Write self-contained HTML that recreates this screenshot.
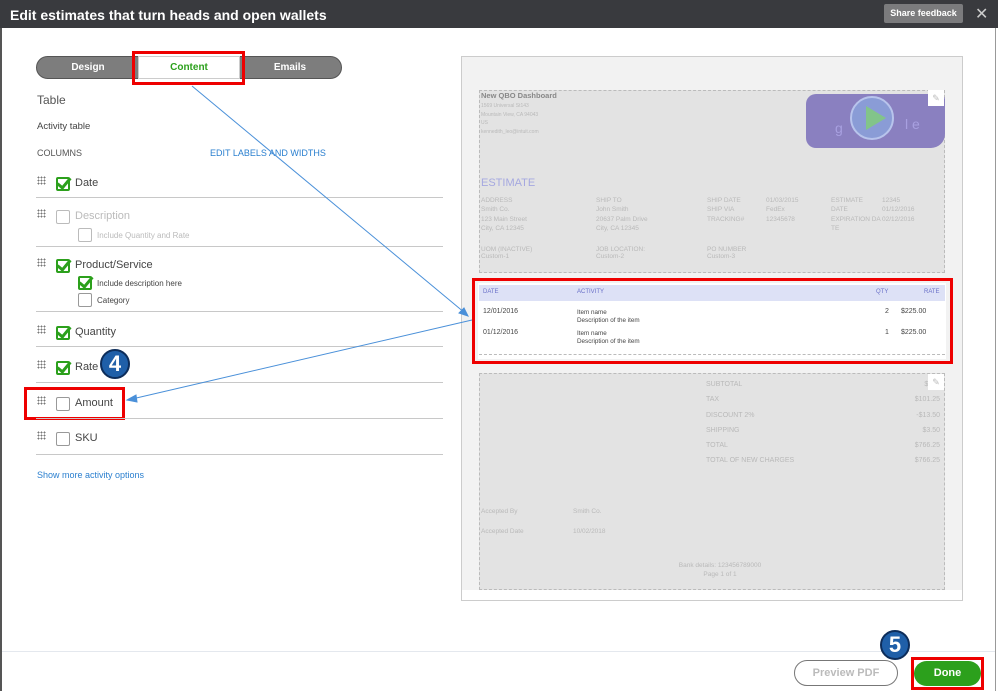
<!DOCTYPE html>
<html><head><meta charset="utf-8"><style>
*{margin:0;padding:0;box-sizing:border-box}
body{width:998px;height:691px;position:relative;background:#fff;font-family:"Liberation Sans",sans-serif;overflow:hidden}
.a{position:absolute}
.hdr{left:0;top:0;width:998px;height:28px;background:#393a3e}
.t{color:#fff;font-size:14px;font-weight:bold;left:10px;top:7px}
.sf{left:884px;top:4px;width:79px;height:19px;background:#7b7b7d;border-radius:2px;color:#fff;font-size:9px;font-weight:bold;text-align:center;line-height:19px}
.lt{font-size:11px;color:#444}
.line{height:1px;background:#c8c8c8;left:36px;width:407px}
.cb{width:14px;height:14px;border:1px solid #999;border-radius:2px;background:#fff}
.cb.on{border:2px solid #2ca01c}
.cb.on::after{content:"";position:absolute;left:2px;top:-4px;width:5px;height:11px;border:solid #2ca01c;border-width:0 3px 3px 0;transform:rotate(40deg)}
.dots{width:9px;height:9px;background:radial-gradient(circle,#777 0.9px,transparent 1px) 0 0/3px 3px}
.g{color:#b9b9b9;font-size:6.5px}
.red{border:3px solid #ee0000}
.circ{width:30px;height:30px;border-radius:50%;background:#1f5fa8;border:2px solid #0d2d5a;color:#fff;font-weight:bold;font-size:22px;text-align:center;line-height:26px}
</style></head><body>
<div class="a hdr"></div>
<div class="a t">Edit estimates that turn heads and open wallets</div>
<div class="a sf">Share feedback</div>
<div class="a" style="left:975px;top:4px;color:#ccc;font-size:16px">✕</div>
<div class="a" style="left:0;top:28px;width:2px;height:663px;background:#555"></div>
<div class="a" style="left:995px;top:28px;width:1px;height:663px;background:#999"></div>

<div class="a" style="left:36px;top:56px;width:306px;height:23px;border-radius:12px;background:#7d7d7d;border:1px solid #555"></div>
<div class="a" style="left:50px;top:62px;width:76px;text-align:center;color:#fff;font-size:10px;font-weight:bold">Design</div>
<div class="a" style="left:138px;top:56px;width:102px;height:23px;background:#fff;border:1px solid #ccc"></div>
<div class="a" style="left:138px;top:62px;width:102px;text-align:center;color:#2ca01c;font-size:10px;font-weight:bold">Content</div>
<div class="a" style="left:242px;top:62px;width:96px;text-align:center;color:#fff;font-size:10px;font-weight:bold">Emails</div>
<div class="a red" style="left:132px;top:51px;width:113px;height:34px"></div>

<div class="a" style="left:37px;top:93px;font-size:12px;color:#555">Table</div>
<div class="a" style="left:37px;top:121px;font-size:9.5px;color:#444">Activity table</div>
<div class="a" style="left:37px;top:148px;font-size:9px;color:#555">COLUMNS</div>
<div class="a" style="left:210px;top:148px;font-size:9px;color:#2a7fcf">EDIT LABELS AND WIDTHS</div>

<div class="a dots" style="left:37px;top:176px"></div><div class="a cb on" style="left:56px;top:177px"></div><div class="a lt" style="left:75px;top:177px">Date</div>
<div class="a line" style="top:197px"></div>
<div class="a dots" style="left:37px;top:209px"></div><div class="a cb" style="left:56px;top:210px;border-color:#bbb"></div><div class="a lt" style="left:75px;top:210px;color:#bbb">Description</div>
<div class="a cb" style="left:78px;top:228px;border-color:#bbb"></div><div class="a" style="left:97px;top:231px;font-size:8px;color:#bbb">Include Quantity and Rate</div>
<div class="a line" style="top:246px"></div>
<div class="a dots" style="left:37px;top:258px"></div><div class="a cb on" style="left:56px;top:259px"></div><div class="a lt" style="left:75px;top:259px">Product/Service</div>
<div class="a cb on" style="left:78px;top:276px"></div><div class="a" style="left:97px;top:279px;font-size:8px;color:#444">Include description here</div>
<div class="a cb" style="left:78px;top:293px"></div><div class="a" style="left:97px;top:296px;font-size:8px;color:#444">Category</div>
<div class="a line" style="top:311px"></div>
<div class="a dots" style="left:37px;top:325px"></div><div class="a cb on" style="left:56px;top:326px"></div><div class="a lt" style="left:75px;top:326px">Quantity</div>
<div class="a line" style="top:346px"></div>
<div class="a dots" style="left:37px;top:360px"></div><div class="a cb on" style="left:56px;top:361px"></div><div class="a lt" style="left:75px;top:361px">Rate</div>
<div class="a circ" style="left:100px;top:349px">4</div>
<div class="a line" style="top:382px"></div>
<div class="a dots" style="left:37px;top:396px"></div><div class="a cb" style="left:56px;top:397px"></div><div class="a lt" style="left:75px;top:397px">Amount</div>
<div class="a red" style="left:24px;top:387px;width:101px;height:33px"></div>
<div class="a line" style="top:418px"></div>
<div class="a dots" style="left:37px;top:431px"></div><div class="a cb" style="left:56px;top:432px"></div><div class="a lt" style="left:75px;top:432px">SKU</div>
<div class="a line" style="top:454px"></div>
<div class="a" style="left:37px;top:470px;font-size:9px;color:#2a7fcf">Show more activity options</div>

<!-- preview -->
<div class="a" style="left:461px;top:56px;width:502px;height:545px;background:#f2f2f2;border:1px solid #ccc"></div>
<div class="a" style="left:462px;top:590px;width:500px;height:10px;background:#fff"></div>
<div class="a" style="left:479px;top:90px;width:466px;height:183px;background:#e3e3e3;border:1px dashed #bbb"></div>
<div class="a" style="left:481px;top:91px;font-size:7.5px;color:#888;font-weight:bold">New QBO Dashboard</div>
<div class="a g" style="left:481px;top:102px;line-height:8.5px;font-size:5px">1569 Universal St143<br>Mountain View, CA 94043<br>US<br>kennedith_leo@intuit.com</div>
<div class="a" style="left:806px;top:94px;width:139px;height:54px;background:#8a80c0;border-radius:10px 6px 14px 10px"></div>
<div class="a" style="left:850px;top:96px;width:44px;height:44px;border-radius:50%;background:#8a9cd6;border:2px solid #b8c4ec"></div>
<div class="a" style="left:866px;top:106px;width:0;height:0;border-left:20px solid #82c48a;border-top:12px solid transparent;border-bottom:12px solid transparent"></div>
<div class="a" style="left:835px;top:120px;font-size:14px;color:#a8a0e0">g</div>
<div class="a" style="left:905px;top:116px;font-size:14px;color:#a8a0e0">l e</div>
<div class="a" style="left:928px;top:90px;width:16px;height:16px;background:#fff;color:#bbb;font-size:9px;text-align:center;line-height:16px">✎</div>
<div class="a" style="left:481px;top:177px;font-size:11px;color:#a5a8e0">ESTIMATE</div>
<div class="a g" style="left:481px;top:196px;line-height:9.3px">ADDRESS<br>Smith Co.<br>123 Main Street<br>City, CA 12345</div>
<div class="a g" style="left:596px;top:196px;line-height:9.3px">SHIP TO<br>John Smith<br>20637 Palm Drive<br>City, CA 12345</div>
<div class="a g" style="left:707px;top:196px;line-height:9.3px">SHIP DATE<br>SHIP VIA<br>TRACKING#</div>
<div class="a g" style="left:766px;top:196px;line-height:9.3px">01/03/2015<br>FedEx<br>12345678</div>
<div class="a g" style="left:831px;top:196px;line-height:9.3px">ESTIMATE<br>DATE<br>EXPIRATION DA<br>TE</div>
<div class="a g" style="left:882px;top:196px;line-height:9.3px">12345<br>01/12/2016<br>02/12/2016</div>
<div class="a g" style="left:481px;top:246px;line-height:7px">UOM (INACTIVE)<br>Custom-1</div>
<div class="a g" style="left:596px;top:246px;line-height:7px">JOB LOCATION:<br>Custom-2</div>
<div class="a g" style="left:707px;top:246px;line-height:7px">PO NUMBER<br>Custom-3</div>

<div class="a" style="left:478px;top:283px;width:468px;height:76px;background:#fff"></div>
<div class="a" style="left:479px;top:285px;width:466px;height:16px;background:#dde1f6"></div>
<div class="a" style="left:483px;top:289px;font-size:6px;color:#6a70c8">DATE</div>
<div class="a" style="left:577px;top:289px;font-size:6px;color:#6a70c8">ACTIVITY</div>
<div class="a" style="left:876px;top:289px;font-size:6px;color:#6a70c8">QTY</div>
<div class="a" style="left:924px;top:289px;font-size:6px;color:#6a70c8">RATE</div>
<div class="a" style="left:483px;top:308px;font-size:7px;color:#444">12/01/2016</div>
<div class="a" style="left:577px;top:309px;font-size:6.3px;color:#444;line-height:7.5px">Item name<br>Description of the item</div>
<div class="a" style="left:885px;top:308px;font-size:7px;color:#444">2</div>
<div class="a" style="left:901px;top:308px;font-size:7px;color:#444">$225.00</div>
<div class="a" style="left:483px;top:329px;font-size:7px;color:#444">01/12/2016</div>
<div class="a" style="left:577px;top:330px;font-size:6.3px;color:#444;line-height:7.5px">Item name<br>Description of the item</div>
<div class="a" style="left:885px;top:329px;font-size:7px;color:#444">1</div>
<div class="a" style="left:901px;top:329px;font-size:7px;color:#444">$225.00</div>
<div class="a" style="left:479px;top:354px;width:466px;border-top:1px dashed #bbb"></div>
<div class="a red" style="left:472px;top:278px;width:481px;height:86px"></div>

<div class="a" style="left:479px;top:373px;width:466px;height:217px;background:#e3e3e3;border:1px dashed #bbb"></div>
<div class="a g" style="left:706px;top:377px;line-height:15.3px;font-size:7px">SUBTOTAL<br>TAX<br>DISCOUNT 2%<br>SHIPPING<br>TOTAL<br>TOTAL OF NEW CHARGES</div>
<div class="a g" style="left:900px;top:377px;line-height:15.3px;font-size:7px;text-align:right;width:40px">$675<br>$101.25<br>-$13.50<br>$3.50<br>$766.25<br>$766.25</div>
<div class="a" style="left:928px;top:374px;width:16px;height:16px;background:#fff;color:#bbb;font-size:9px;text-align:center;line-height:16px">✎</div>
<div class="a g" style="left:481px;top:502px;line-height:20px">Accepted By<br>Accepted Date</div>
<div class="a g" style="left:573px;top:502px;line-height:20px">Smith Co.<br>10/02/2018</div>
<div class="a g" style="left:620px;top:562px;width:200px;text-align:center;line-height:8.5px">Bank details: 123456789000<br>Page 1 of 1</div>

<svg class="a" style="left:0;top:0" width="998" height="691"><g stroke="#4a90d9" stroke-width="1" fill="#4a90d9">
<line x1="192" y1="86" x2="465" y2="313"/><polygon points="468,316 459,313 464,308"/>
<line x1="472" y1="320" x2="132" y2="399"/><polygon points="127,400 136,395 137,402"/></g></svg>

<div class="a" style="left:2px;top:651px;width:993px;height:1px;background:#e4e8ee"></div>
<div class="a" style="left:794px;top:660px;width:104px;height:26px;border:1px solid #777;border-radius:13px;text-align:center;line-height:24px;font-size:11px;font-weight:bold;color:#bbb">Preview PDF</div>
<div class="a" style="left:914px;top:661px;width:67px;height:25px;background:#2ca01c;border-radius:13px;text-align:center;line-height:24px;font-size:11px;font-weight:bold;color:#fff">Done</div>
<div class="a red" style="left:911px;top:657px;width:73px;height:33px"></div>
<div class="a circ" style="left:880px;top:630px">5</div>
</body></html>
